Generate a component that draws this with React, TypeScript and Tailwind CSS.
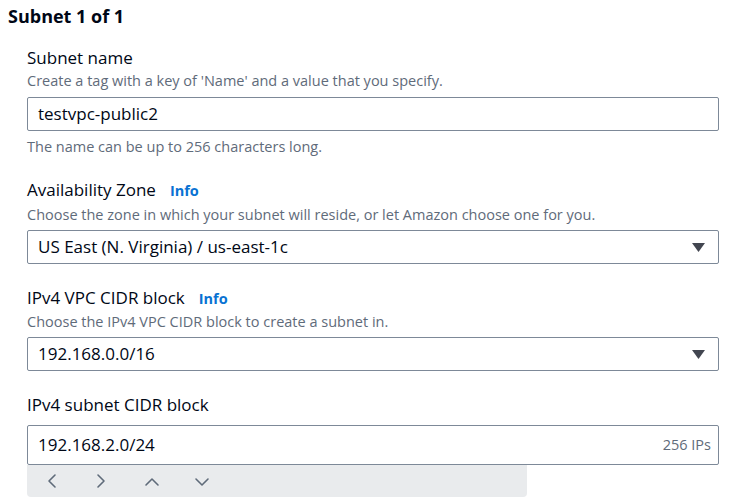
import React from "react";

const font = { fontFamily: "'Open Sans', 'Noto Sans', sans-serif" };

function Caret() {
  return (
    <svg width="13" height="9" viewBox="0 0 13 9" className="shrink-0">
      <path d="M0 0 H13 L6.5 9 Z" fill="#424650" />
    </svg>
  );
}

function Info() {
  return <span className="ml-[14px] text-[14.5px] leading-[22px] font-bold text-[#0972d3]">Info</span>;
}

export default function App() {
  return (
    <div className="w-[734px] h-[500px] bg-white text-[#000716] overflow-hidden" style={font}>
      <div className="pl-[8px] pt-[4px] h-[28px] text-[18px] leading-[24px] font-bold">Subnet 1 of 1</div>
      <div className="pl-[27px] pr-[15px]">
        {/* Field 1 */}
        <div className="mt-[19px] h-[22px] text-[17px] leading-[22px]">Subnet name</div>
        <div className="mt-[3px] h-[18px] text-[14.5px] leading-[18px] text-[#5f6b7a]">
          Create a tag with a key of 'Name' and a value that you specify.
        </div>
        <div className="mt-[7px] h-[34px] border border-[#7d8998] rounded-[2px] flex items-center pl-[10px] text-[17px]">
          testvpc-public2
        </div>
        <div className="mt-[7px] h-[18px] text-[14.5px] leading-[18px] text-[#5f6b7a]">
          The name can be up to 256 characters long.
        </div>

        {/* Field 2 */}
        <div className="mt-[23px] h-[22px] text-[17px] leading-[22px] flex items-baseline">
          <span>Availability Zone</span>
          <Info />
        </div>
        <div className="mt-[5px] h-[18px] text-[14.5px] leading-[18px] text-[#5f6b7a]">
          Choose the zone in which your subnet will reside, or let Amazon choose one for you.
        </div>
        <div className="mt-[6px] h-[34px] border border-[#7d8998] rounded-[2px] flex items-center justify-between pl-[10px] pr-[13px] text-[17px]">
          <span>US East (N. Virginia) / us-east-1c</span>
          <Caret />
        </div>

        {/* Field 3 */}
        <div className="mt-[23px] h-[22px] text-[17px] leading-[22px] flex items-baseline">
          <span>IPv4 VPC CIDR block</span>
          <Info />
        </div>
        <div className="mt-[4px] h-[18px] text-[14.5px] leading-[18px] text-[#5f6b7a]">
          Choose the IPv4 VPC CIDR block to create a subnet in.
        </div>
        <div className="mt-[6px] h-[34px] border border-[#7d8998] rounded-[2px] flex items-center justify-between pl-[10px] pr-[13px] text-[17px]">
          <span>192.168.0.0/16</span>
          <Caret />
        </div>

        {/* Field 4 */}
        <div className="mt-[23px] h-[22px] text-[17px] leading-[22px]">IPv4 subnet CIDR block</div>
        <div className="mt-[9px] h-[40px] border border-[#7d8998] rounded-[2px] flex items-center justify-between pl-[10px] pr-[7px] text-[17px]">
          <span>192.168.2.0/24</span>
          <span className="text-[14.5px] text-[#5f6b7a]">256 IPs</span>
        </div>
        <div className="w-[500px] h-[32px] bg-[#e9ebed] rounded-b-[4px] flex items-center">
          <svg width="200" height="16" viewBox="0 0 200 16" className="ml-[18px]">
            <g fill="none" stroke="#5f6b7a" strokeWidth="1.6" strokeLinecap="round" strokeLinejoin="round">
              <path d="M10 2 L4 8 L10 14" />
              <path d="M53 2 L59 8 L53 14" />
              <path d="M101 12 L107 6 L113 12" />
              <path d="M151 6 L157 12 L163 6" />
            </g>
          </svg>
        </div>
      </div>
    </div>
  );
}
